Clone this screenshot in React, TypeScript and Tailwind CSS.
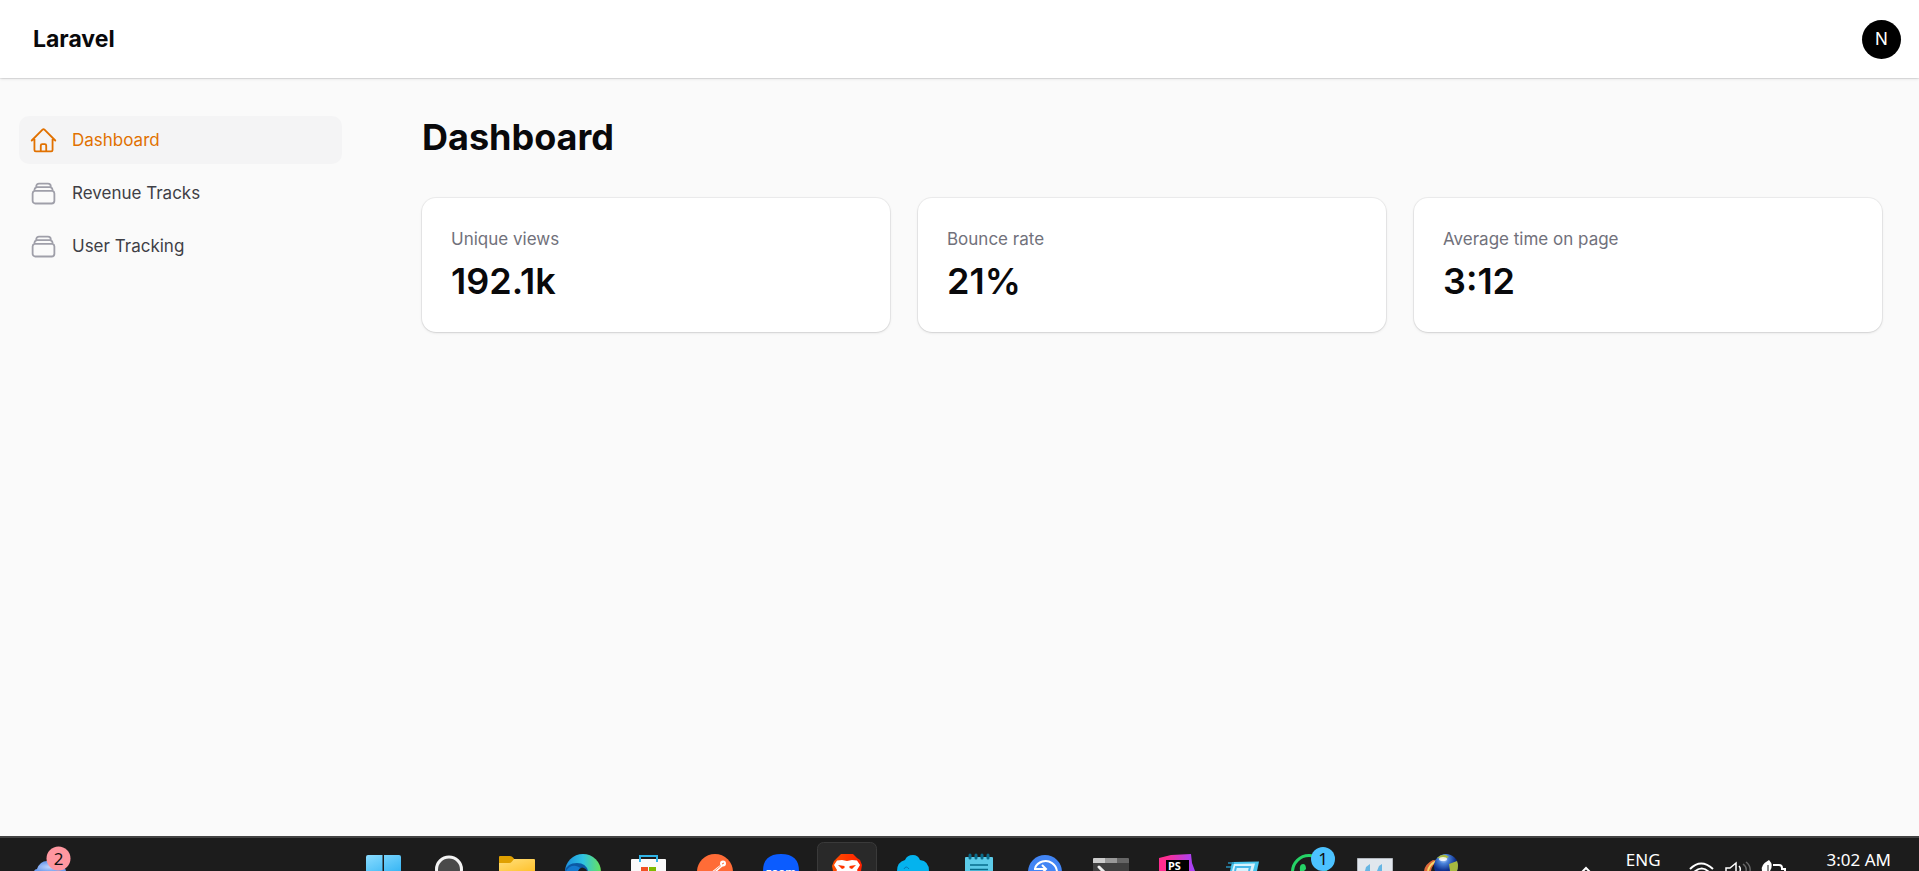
import type { ReactNode } from "react";

const stats = [
  { label: "Unique views", value: "192.1k" },
  { label: "Bounce rate", value: "21%" },
  { label: "Average time on page", value: "3:12" },
];

const HomeIcon = () => (
  <svg className="size-[29px] shrink-0 text-[#e17100]" viewBox="0 0 24 24" fill="none" stroke="currentColor" strokeWidth="1.5" strokeLinecap="round" strokeLinejoin="round" aria-hidden="true">
    <path d="m2.25 12 8.954-8.955c.44-.439 1.152-.439 1.591 0L21.75 12M4.5 9.75v10.125c0 .621.504 1.125 1.125 1.125H9.75v-4.875c0-.621.504-1.125 1.125-1.125h2.25c.621 0 1.125.504 1.125 1.125V21h4.125c.621 0 1.125-.504 1.125-1.125V9.75M8.25 21h8.25" />
  </svg>
);

const StackIcon = () => (
  <svg className="size-[29px] shrink-0 text-[#9f9fa9]" viewBox="0 0 24 24" fill="none" stroke="currentColor" strokeWidth="1.5" strokeLinecap="round" strokeLinejoin="round" aria-hidden="true">
    <path d="M6 6.878V6a2.25 2.25 0 0 1 2.25-2.25h7.5A2.25 2.25 0 0 1 18 6v.878m-12 0c.235-.083.487-.128.75-.128h10.5c.263 0 .515.045.75.128m-12 0A2.25 2.25 0 0 0 4.5 9v.878m13.5-3A2.25 2.25 0 0 1 19.5 9v.878m0 0a2.246 2.246 0 0 0-.75-.128H5.25c-.263 0-.515.045-.75.128m15 0A2.25 2.25 0 0 1 21 12v6a2.25 2.25 0 0 1-2.25 2.25H5.25A2.25 2.25 0 0 1 3 18v-6c0-.98.626-1.813 1.5-2.122" />
  </svg>
);

const TaskIcon = ({ label, children }: { label: string; children: ReactNode }) => (
  <button type="button" aria-label={label} className="w-[66px] shrink-0">
    <svg className="block h-[33px] w-[66px]" viewBox="0 0 66 33" aria-hidden="true">
      {children}
    </svg>
  </button>
);

const Taskbar = () => (
  <footer className="flex h-[35px] overflow-hidden border-t-2 border-[#434343] bg-[#1c1c1c] font-['Noto_Sans',sans-serif] text-white">
    <svg width="0" height="0" className="absolute" aria-hidden="true">
      <defs>
        <linearGradient id="win" x1="0" x2="1" y2="1">
          <stop stopColor="#8adcff" />
          <stop offset="1" stopColor="#38b6f4" />
        </linearGradient>
        <linearGradient id="folder" x2="1" y2="1">
          <stop stopColor="#ffdf7c" />
          <stop offset="1" stopColor="#ffc22d" />
        </linearGradient>
        <linearGradient id="edge" x2="1">
          <stop stopColor="#1c8ede" />
          <stop offset=".5" stopColor="#2fc3e3" />
          <stop offset="1" stopColor="#68e35b" />
        </linearGradient>
        <linearGradient id="brave" x2="1">
          <stop stopColor="#ff5000" />
          <stop offset="1" stopColor="#ff2000" />
        </linearGradient>
        <linearGradient id="storm" x2="1">
          <stop offset=".2" stopColor="#ff2d90" />
          <stop offset="1" stopColor="#a043ff" />
        </linearGradient>
        <radialGradient id="globe" cx=".4" cy=".2">
          <stop stopColor="#dcebff" />
          <stop offset=".4" stopColor="#4b84dc" />
          <stop offset="1" stopColor="#0d2f8c" />
        </radialGradient>
        <radialGradient id="weather" cx=".5" cy=".6">
          <stop stopColor="#c3d6ff" />
          <stop offset="1" stopColor="#6f9eee" />
        </radialGradient>
      </defs>
    </svg>

    <div className="w-[350px] shrink-0">
      <button type="button" aria-label="Widgets" className="block">
        <svg className="block h-[33px] w-[90px]" viewBox="0 0 90 33" aria-hidden="true">
          <path d="M34 33q1-2 3-2 3-8 10-8 16 0 19 10z" fill="url(#weather)" />
          <circle cx="58.500" cy="20.500" r="12" fill="#ff97a0" />
          <text x="58.500" y="26.500" textAnchor="middle" fontSize="17" fill="#111">2</text>
        </svg>
      </button>
    </div>

    <nav aria-label="Taskbar" className="flex">
      <TaskIcon label="Start">
        <path d="M16 33V19q0-2 2-2h14.500v16zM34 33V17h15q2 0 2 2v14z" fill="url(#win)" />
      </TaskIcon>
      <TaskIcon label="Search">
        <circle cx="33" cy="31.500" r="12.500" fill="#4a4a4a" stroke="#f3f3f3" strokeWidth="3" />
      </TaskIcon>
      <TaskIcon label="File Explorer">
        <path d="M17 33V19q0-1 1-1h10q2 0 3 1.500L33 22v11z" fill="#dfa000" />
        <path d="M17 33v-8h10q2 0 3-1.500l2-2.500h20q1 0 1 1v11z" fill="url(#folder)" />
      </TaskIcon>
      <TaskIcon label="Edge">
        <circle cx="35" cy="34" r="18" fill="url(#edge)" />
        <path d="M17 33q2-8 12-8 9 0 11 8z" fill="#0c59a4" />
        <path d="M18 33q4-6 10-5 5 1 6 5z" fill="#1479cf" />
        <path d="M30 33q1-3 4-3.500 4 .5 5 3.500z" fill="#1c1c1c" />
      </TaskIcon>
      <TaskIcon label="Store">
        <path d="M26 25v-7h17v7" fill="none" stroke="#31b5e8" strokeWidth="2" />
        <path d="M17 33V22q0-1 1-1h33q1 0 1 1v11z" fill="#fafafa" />
        <path d="M26 21v3M43 21v3" stroke="#31b5e8" strokeWidth="2" />
        <path d="M27 29h7v4h-7z" fill="#f25022" />
        <path d="M35 29h7v4h-7z" fill="#7fba00" />
      </TaskIcon>
      <TaskIcon label="Postman">
        <circle cx="35" cy="34" r="18" fill="#ff6c37" />
        <circle cx="43" cy="25.500" r="3" fill="#fff" />
        <path d="M41.500 26 30 35h5l8-7z" fill="#fff" />
        <path d="m41 27.500-7 6" stroke="#ff6c37" strokeWidth=".7" />
        <path d="m42 26 2-1" stroke="#ff6c37" />
      </TaskIcon>
      <TaskIcon label="Zoom">
        <path d="M17 33q0-17 18-17t18 17z" fill="#0b5cff" />
        <text x="35" y="38" textAnchor="middle" fontSize="11" fontWeight="700" fill="#fff">zoom</text>
      </TaskIcon>
      <TaskIcon label="Brave">
        <rect x="5.500" y="4.500" width="59" height="40" rx="6" fill="#292929" stroke="#3a3a3a" />
        <path d="m21 33-1-5 2-5 3-3 4-4h12l4 4 3 2 2 5-1 6z" fill="url(#brave)" />
        <path d="m25 22.500 5-.5 5 1 5-1 5 .5 3 4.500-3 5 .5 1h-21l.5-1-3-5z" fill="#fff" />
        <path d="m26 27 6.500 1v2L30 31zM44 27l-6.500 1v2L40 31z" fill="#ff3500" />
      </TaskIcon>
      <TaskIcon label="Cloud">
        <path d="M19 33q0-9 8-11 2-5 8-5 5 0 7 5 9 1 9 11z" fill="#04b3ee" />
        <path d="M26 31q2-4 5 0" fill="none" stroke="#0878b5" />
      </TaskIcon>
      <TaskIcon label="Notepad">
        <path d="M21 33V20q0-1 1-1h26q1 0 1 1v13z" fill="#5ccbe8" />
        <path d="M26 27h18M26 31.500h18" stroke="#066d8c" strokeWidth="1.500" />
        <path d="M26 17v3M32 17v3M38 17v3M44 17v3" stroke="#0a6c8b" strokeWidth="3" strokeLinecap="round" />
      </TaskIcon>
      <TaskIcon label="Sync">
        <circle cx="35" cy="34" r="17" fill="#4285f4" />
        <path d="M25 30a11.500 11.500 0 1 1 1 11" fill="none" stroke="#fff" strokeWidth="2" />
        <path d="M24 31h12M32 27l4 4-4 4" fill="none" stroke="#fff" strokeWidth="2" />
      </TaskIcon>
      <TaskIcon label="Terminal">
        <path d="M17 25h36v8H17z" fill="#404040" />
        <path d="M17 25v-4q0-1 1-1h11v5z" fill="#ccc" />
        <path d="M29 20h12v5H29z" fill="#999" />
        <path d="M41 20h11q1 0 1 1v4H41z" fill="#666" />
        <path d="m23 29 6 6" stroke="#eee" strokeWidth="3" strokeLinecap="round" />
      </TaskIcon>
      <TaskIcon label="PhpStorm">
        <path d="m17 20 12-3 20-1 1 9 3 8H17z" fill="url(#storm)" />
        <path d="M24 22h23v11H24z" fill="#000" />
        <text x="26" y="32" fontSize="11" fontWeight="700" fill="#fff">PS</text>
      </TaskIcon>
      <TaskIcon label="Run">
        <path d="m24 24 27-.5-2 9.500H22z" fill="#46c5ee" />
        <path d="m26 26 21-.5-2 7.500H24z" fill="#d7f3fd" />
        <path d="m27 33 1-4h14l-1 4" fill="none" stroke="#46b7e8" strokeWidth="2" />
        <path d="M20 25h6M18 29h5" stroke="#278db5" strokeWidth="1.500" />
      </TaskIcon>
      <TaskIcon label="WhatsApp">
        <circle cx="35" cy="34" r="16.500" fill="none" stroke="#25d366" strokeWidth="3" />
        <path d="M26 33q-1-7 3-7 3 0 3 5l-2 2z" fill="#25d366" />
        <circle cx="49" cy="21" r="12" fill="#4cc2ff" />
        <text x="49" y="27" textAnchor="middle" fontSize="17" fill="#111">1</text>
      </TaskIcon>
      <TaskIcon label="Monitor">
        <path d="M17.500 33V20.500h35V33" fill="#e1e7ed" stroke="#b1b6bd" />
        <path d="m25 33 1-4 4-3v7M37 33l2-5 3-2v7" fill="#66b6e3" />
      </TaskIcon>
      <TaskIcon label="Download Manager">
        <path d="M18 33q1-7 9-11l6 1q-7 3-8 10z" fill="#e06a3b" />
        <path d="M22 33q1-6 8-10" fill="none" stroke="#f6d86b" strokeWidth="2" />
        <circle cx="40" cy="28" r="12" fill="url(#globe)" />
        <path d="M31 20q4-4 9-3l3 2-5 2zM43 26l8-3q2 5 0 10h-7z" fill="#a6b940" />
        <ellipse cx="37" cy="21" rx="4" ry="2" fill="#fff" opacity=".8" />
      </TaskIcon>
    </nav>

    <div className="ml-auto flex pr-7">
      <button type="button" aria-label="Show hidden icons" className="mr-8 w-4">
        <svg className="block h-[33px] w-4" viewBox="0 0 16 33" fill="none" stroke="white" strokeWidth="2" aria-hidden="true">
          <path d="m2 36 6-6 6 6" />
        </svg>
      </button>
      <button type="button" className="mr-7 self-start pt-3 text-[17px] leading-5">ENG</button>
      <button type="button" aria-label="Network, volume and battery" className="mr-10">
        <svg className="block h-[33px] w-[98px]" viewBox="0 0 98 33" fill="none" stroke="white" aria-hidden="true">
          <path d="M1 31q11-11 23 0M5 34q8-7 15 0" strokeWidth="2" />
          <path d="M37 33v-3h4l6-5v8" strokeWidth="1.500" />
          <path d="M50 28q2 2 1 5" strokeWidth="1.500" />
          <path d="M54 26q4 3 3 7M57 24q5 4 4 9" stroke="#666" strokeWidth="1.500" />
          <path d="M73 33q-2-6 7-11 5 5 1 11z" fill="white" stroke="none" />
          <path d="M79 27v6" stroke="#1c1c1c" />
          <path d="M84 27h6q3 0 3 3v1h3v2" strokeWidth="2" />
        </svg>
      </button>
      <button type="button" className="self-start pt-3 text-[17px] leading-5">3:02 AM</button>
    </div>
  </footer>
);

export default function App() {
  return (
    <div className="flex min-h-screen flex-col bg-[#fafafa] font-['Inter',sans-serif] text-[#09090b]">
      <header className="flex h-[78px] items-center justify-between bg-white pr-[18px] pl-[33px] shadow-sm ring-1 ring-[#09090b]/5">
        <a href="#" className="text-[23px] leading-7 font-bold">
          Laravel
        </a>
        <button type="button" aria-label="User menu" className="size-[39px] rounded-full bg-black text-[17px] leading-6 text-white">
          N
        </button>
      </header>

      <div className="flex flex-1">
        <aside className="w-[383px] shrink-0 pt-[38px] pr-[41px] pl-[19px]">
          <nav aria-label="Sidebar" className="flex flex-col gap-[5px] text-[17px] leading-6 text-[#3f3f46]">
            <a href="#" aria-current="page" className="flex h-12 items-center gap-[14px] rounded-[10px] bg-[#f4f4f5] px-[10px] text-[#e17100]">
              <HomeIcon />
              Dashboard
            </a>
            <a href="#" className="flex h-12 items-center gap-[14px] rounded-[10px] px-[10px]">
              <StackIcon />
              Revenue Tracks
            </a>
            <a href="#" className="flex h-12 items-center gap-[14px] rounded-[10px] px-[10px]">
              <StackIcon />
              User Tracking
            </a>
          </nav>
        </aside>

        <main className="flex-1 pt-[39px] pr-[37px] pl-[39px]">
          <h1 className="text-4xl font-bold">Dashboard</h1>
          <div className="mt-[41px] grid grid-cols-3 gap-7">
            {stats.map((stat) => (
              <div key={stat.label} className="rounded-[14px] bg-white p-[29px] shadow-sm ring-1 ring-[#09090b]/5">
                <p className="text-[17px] leading-6 text-[#71717b]">{stat.label}</p>
                <p className="mt-2 text-4xl leading-11 font-semibold">{stat.value}</p>
              </div>
            ))}
          </div>
        </main>
      </div>

      <Taskbar />
    </div>
  );
}
